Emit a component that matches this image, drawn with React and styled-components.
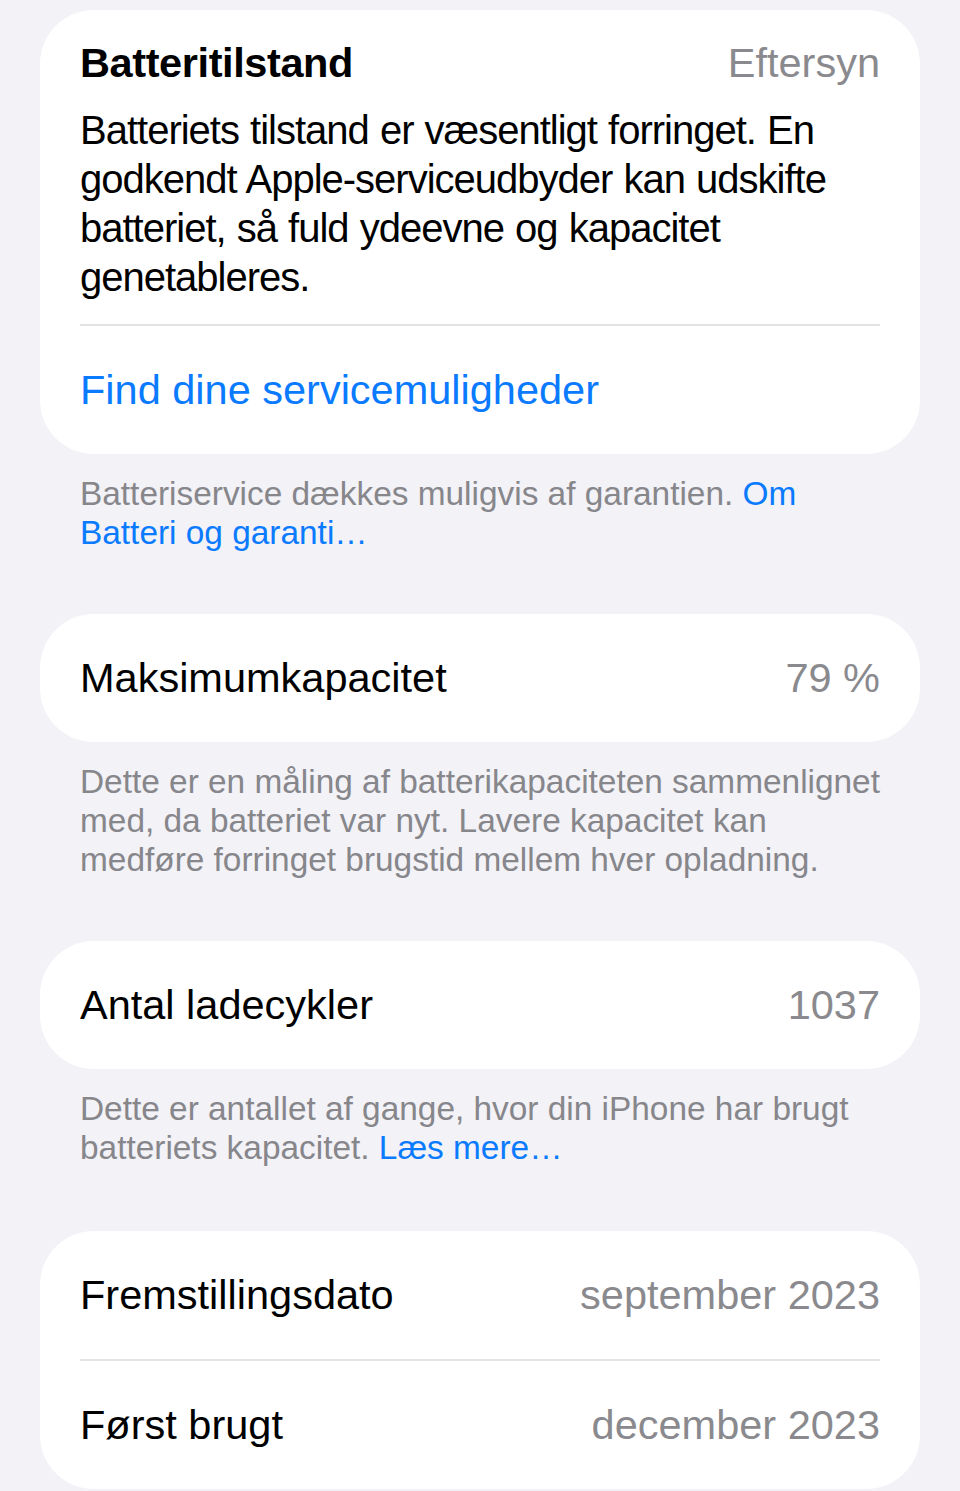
import styled, { createGlobalStyle } from "styled-components"

const GlobalStyle = createGlobalStyle`
  body {
    margin: 0;
    background: #f2f2f7;
    font-family: "Liberation Sans", Arial, sans-serif;
    -webkit-font-smoothing: antialiased;
  }
`

const Page = styled.div`
  padding: 10px 40px 0;
  display: flex;
  flex-direction: column;
`

const Section = styled.section`
  display: flex;
  flex-direction: column;
  margin-bottom: ${(p) => p.$gap || 0}px;
`

const Card = styled.div`
  background: #fff;
  border-radius: 54px;
  padding: 0 40px;
  display: flex;
  flex-direction: column;
`

const HealthHeader = styled.div`
  display: flex;
  justify-content: space-between;
  align-items: center;
  padding-top: 28px;
  font-size: 41.5px;
  line-height: 49px;
`

const HeaderTitle = styled.span`
  font-weight: 700;
  color: #000;
  letter-spacing: -0.4px;
`

const Value = styled.span`
  color: #8a8a8e;
  font-size: 41.5px;
  white-space: nowrap;
`

const Body = styled.p`
  margin: 19px 0 22px;
  font-size: 40px;
  line-height: 49px;
  letter-spacing: -1px;
  word-spacing: 1px;
  color: #000;
  white-space: nowrap;
`

const Divider = styled.div`
  height: 2px;
  background: #e3e3e6;
`

const Row = styled.div`
  height: 128px;
  display: flex;
  align-items: center;
  justify-content: space-between;
`

const Label = styled.span`
  font-size: 41.5px;
  color: ${(p) => (p.$link ? "#0a7aff" : "#000")};
`

const Footer = styled.p`
  margin: 20px 40px 0;
  font-size: 33.4px;
  line-height: 39px;
  color: #86868b;
  white-space: nowrap;
`

const Link = styled.span`
  color: #0a7aff;
`

const App = () => {
  return (
    <>
      <GlobalStyle />
      <Page>
        <Section $gap={62}>
          <Card>
            <HealthHeader>
              <HeaderTitle>Batteritilstand</HeaderTitle>
              <Value>Eftersyn</Value>
            </HealthHeader>
            <Body>
              Batteriets tilstand er væsentligt forringet. En
              <br />
              godkendt Apple-serviceudbyder kan udskifte
              <br />
              batteriet, så fuld ydeevne og kapacitet
              <br />
              genetableres.
            </Body>
            <Divider />
            <Row>
              <Label $link>Find dine servicemuligheder</Label>
            </Row>
          </Card>
          <Footer>
            Batteriservice dækkes muligvis af garantien. <Link>Om</Link>
            <br />
            <Link>Batteri og garanti…</Link>
          </Footer>
        </Section>

        <Section $gap={62}>
          <Card>
            <Row>
              <Label>Maksimumkapacitet</Label>
              <Value>79 %</Value>
            </Row>
          </Card>
          <Footer>
            Dette er en måling af batterikapaciteten sammenlignet
            <br />
            med, da batteriet var nyt. Lavere kapacitet kan
            <br />
            medføre forringet brugstid mellem hver opladning.
          </Footer>
        </Section>

        <Section $gap={64}>
          <Card>
            <Row>
              <Label>Antal ladecykler</Label>
              <Value>1037</Value>
            </Row>
          </Card>
          <Footer>
            Dette er antallet af gange, hvor din iPhone har brugt
            <br />
            batteriets kapacitet. <Link>Læs mere…</Link>
          </Footer>
        </Section>

        <Section>
          <Card>
            <Row>
              <Label>Fremstillingsdato</Label>
              <Value>september 2023</Value>
            </Row>
            <Divider />
            <Row>
              <Label>Først brugt</Label>
              <Value>december 2023</Value>
            </Row>
          </Card>
        </Section>
      </Page>
    </>
  )
}

export default App
